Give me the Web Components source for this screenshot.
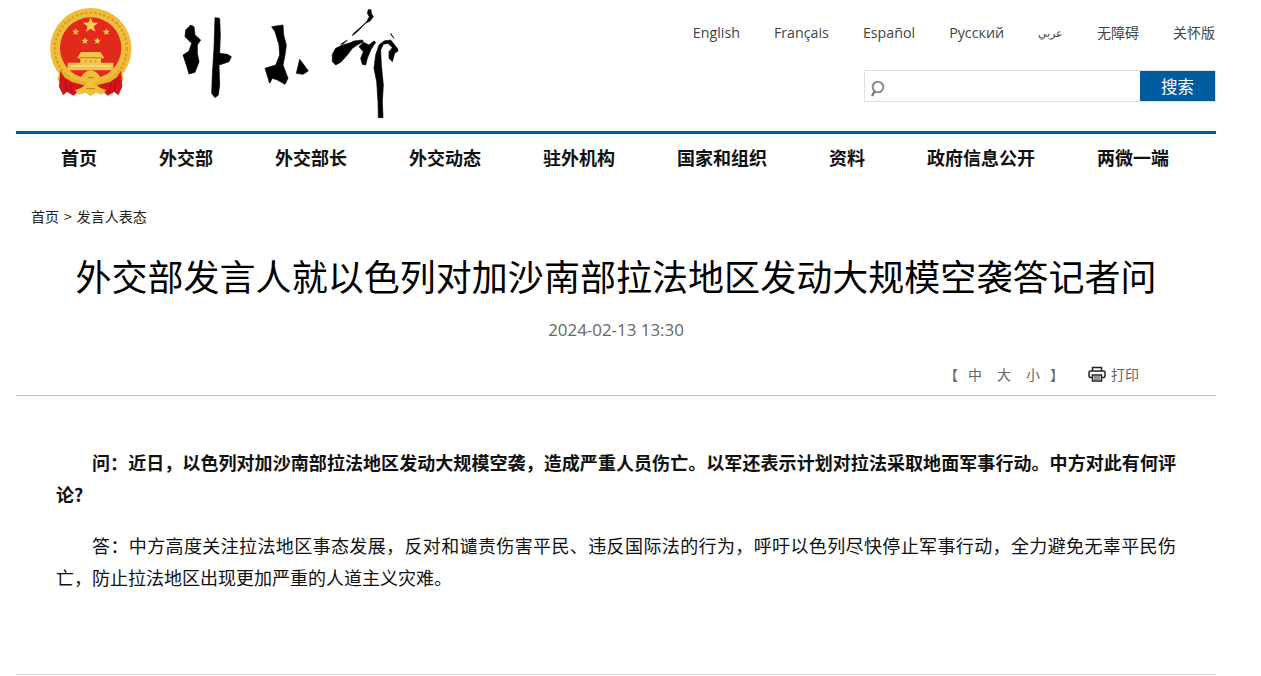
<!DOCTYPE html>
<html lang="zh"><head><meta charset="utf-8"><title>外交部</title>
<style>
html,body{margin:0;padding:0;background:#fff;overflow:hidden;height:676px}
body{font-family:"Open Sans","Noto Sans CJK SC",sans-serif;color:#000}
</style></head><body>
<mfa-page>
  <mfa-header></mfa-header>
  <mfa-nav></mfa-nav>
  <mfa-crumbs></mfa-crumbs>
  <mfa-article>
    <span slot="title">外交部发言人就以色列对加沙南部拉法地区发动大规模空袭答记者问</span>
    <span slot="date">2024-02-13 13:30</span>
    <p class="q">问：近日，以色列对加沙南部拉法地区发动大规模空袭，造成严重人员伤亡。以军还表示计划对拉法采取地面军事行动。中方对此有何评论?</p>
    <p>答：中方高度关注拉法地区事态发展，反对和谴责伤害平民、违反国际法的行为，呼吁以色列尽快停止军事行动，全力避免无辜平民伤亡，防止拉法地区出现更加严重的人道主义灾难。</p>
  </mfa-article>
</mfa-page>
<script>
function def(name,html){customElements.define(name,class extends HTMLElement{constructor(){super();this.attachShadow({mode:"open"}).innerHTML=html}})}
const F='"Noto Sans CJK SC",sans-serif';
const star=(x,y,r)=>{let p=[];for(let i=0;i<10;i++){const a=-Math.PI/2+i*Math.PI/5,q=i%2?r*.42:r;p.push((x+q*Math.cos(a)).toFixed(2)+" "+(y+q*Math.sin(a)).toFixed(2))}return `<polygon points="${p.join(",")}"/>`};
def("mfa-page",`<style>:host{display:block;width:1200px;margin-left:16px}</style><slot></slot>`);
def("mfa-emblem",`<style>:host{display:block;width:100px;height:100px}svg{display:block}</style>
<svg width="100" height="100" viewBox="0 0 100 100" role="img" aria-label="国徽">
<defs><filter id="b" x="-5%" y="-5%" width="110%" height="110%"><feGaussianBlur stdDeviation=".4"/></filter></defs>
<g filter="url(#b)" transform="translate(4 2) scale(.3333)">
<circle cx="137.500" cy="140" r="122" fill="#efbc3a"/>
<circle cx="137.500" cy="140" r="108" fill="none" stroke="#dd9f22" stroke-width="7" stroke-dasharray="8 6"/>
<circle cx="137" cy="138" r="92" fill="#e12b1f"/>
<g fill="#f8d04c">${star(137,70,24)}${star(92,90,11.5)}${star(184,90,11.5)}${star(120,117,11.5)}${star(157,117,11.5)}</g>
<path d="M108 150H166L178 168L168 170V182H205V205H68V182H106V170L96 168Z" fill="#f2c44e"/>
<path d="M104 165H170V169H104Z" fill="#d4861e"/>
<path d="M78 190H197V194H78Z" fill="#f8dd8a"/>
<path d="M120 174h4v7h-4zM135 174h4v7h-4zM150 174h4v7h-4z" fill="#d98a22"/>
<path d="M46 202C62 226 96 240 137 240C178 240 212 226 228 202L236 232L226 250L137 256L48 250L38 232Z" fill="#e9b02a"/>
<path d="M46 206L58 226L80 240L118 250L104 264L86 281L66 270L54 280L42 254Z" fill="#d3181c"/>
<path d="M228 206L216 226L194 240L156 250L170 264L188 281L208 270L220 280L232 254Z" fill="#d3181c"/>
<path d="M60 232l6 34M76 242l6 32M214 232l-6 34M198 242l-6 32" stroke="#a50f14" stroke-width="3" fill="none"/>
<path d="M116 214L126 208L137 204L148 208L158 214L166 226L152 236L148 246L166 258L184 264L172 278L152 272L137 282L122 272L102 278L90 264L108 258L126 246L122 236L108 226Z" fill="#f0c038"/>
<path d="M128 224h18v5h-18zM124 258h26v4h-26z" fill="#cf861e"/>
</g>
</svg>`);
def("mfa-logo",`<style>:host{display:block;width:240px;height:125px}svg{display:block}</style>
<svg width="240" height="125" viewBox="0 0 720 375" fill="#000" stroke="#000" stroke-width="2" stroke-linejoin="round" role="img" aria-label="外交部">
<g transform="translate(30 45)">
<path d="M35 30 L45 35 L48 60 L65 75 L55 90 L55 115 L60 140 L48 172 L30 177 L22 150 L12 120 L30 108 L38 85 L18 65 L20 45Z"/>
<path d="M108 8 L122 10 L124 60 L122 115 L145 118 L157 125 L150 140 L130 147 L120 150 L122 210 L118 240 L108 248 L98 235 L100 180 L105 100Z"/>
<path d="M278 35 L312 30 L314 60 L322 90 L318 120 L312 150 L327 190 L318 208 L295 195 L280 190 L272 205 L258 160 L290 150 L302 120 L300 90 L288 50Z"/>
<path d="M362 133 L375 150 L388 168 L372 178 L352 175 L358 150Z"/>
</g>
<g transform="translate(465 15)">
<path d="M133 14 L141 14 L142 25 L148 35 L138 48 L125 55 L100 80 L85 92 L88 86 L115 62 L128 50 L136 35 L130 25Z"/>
<path d="M25 148 L35 130 L55 120 L75 115 L90 108 L115 105 L118 110 L100 120 L85 130 L70 150 L50 172 L35 180 L25 170Z"/>
<path d="M50 118 L70 105 L60 115Z"/>
<path d="M105 125 L118 112 L135 120 L150 108 L155 112 L140 135 L130 160 L125 180 L115 178 L110 160 L118 140Z"/>
<path d="M150 190 L155 150 L165 120 L180 108 L200 105 L212 120 L220 130 L222 138 L212 145 L205 170 L195 160 L195 140 L205 128 L192 115 L178 118 L170 135 L172 180 L178 240 L175 290 L177 338 L163 338 L162 290 L158 230Z"/>
<path d="M200 85 L210 100 L203 92Z"/>
</g>
</svg>`);
def("mfa-search",`<style>:host{display:flex;width:352px;height:32px;box-sizing:border-box;border:1px solid #dcdfe3;font-family:${F}}
.i{flex:1;display:flex;align-items:center;padding-left:5px}
button{all:unset;width:75px;margin:0;background:#005c9f;color:#fff;font-size:16.500px;text-align:center;line-height:30px}</style>
<div class="i"><svg width="16" height="24" viewBox="0 0 16 24"><circle cx="8" cy="13" r="5.300" fill="none" stroke="#8a8a8a" stroke-width="2"/><path d="M4.500 17.500L2 22" stroke="#777" stroke-width="2.400"/></svg></div>
<button>搜索</button>`);
def("mfa-header",`<style>:host{display:flex;height:131px;box-sizing:border-box}
.e{margin:0 0 0 25px}.l{margin-left:28px}
.r{margin-left:auto;display:flex;flex-direction:column;align-items:flex-end}
.langs{display:flex;gap:34px;margin-top:23px;padding-right:1px;font:14.250px/20px "Open Sans","Noto Sans CJK SC",sans-serif;color:#444}
.s{margin-top:27px}
.z{font:14px/18px ${F}}
.ar{font-size:11px}</style>
<mfa-emblem class="e"></mfa-emblem><mfa-logo class="l"></mfa-logo>
<div class="r"><div class="langs"><span>English</span><span>Français</span><span>Español</span><span>Русский</span><span class="ar">عربي</span><span class="z">无障碍</span><span class="z">关怀版</span></div>
<mfa-search class="s"></mfa-search></div>`);
def("mfa-nav",`<style>:host{display:flex;height:46px;padding-bottom:4px;border-top:3px solid #005c9f;padding-left:45px;gap:62px;align-items:center;font:700 18px/46px ${F};color:#111;white-space:nowrap}
</style><span>首页</span><span>外交部</span><span>外交部长</span><span>外交动态</span><span>驻外机构</span><span>国家和组织</span><span>资料</span><span>政府信息公开</span><span>两微一端</span>`);
def("mfa-crumbs",`<style>:host{display:flex;gap:5px;margin-top:22px;padding-left:15px;font:14px/20px ${F};color:#222;height:20px}</style><span>首页</span><span>&gt;</span><span>发言人表态</span>`);
def("mfa-article",`<style>:host{display:block}
h1{margin:24px 0 0;font:400 36px/50px ${F};text-align:center;color:#000;letter-spacing:.04px;white-space:nowrap}
.d{margin-top:18px;text-align:center;font:16.900px/24px "Open Sans",sans-serif;color:#666}
.bar{margin-top:13px;height:41px;padding-bottom:2px;display:flex;align-items:center;justify-content:flex-end;padding-right:77px;border-bottom:1px solid #a9c9e0;font:14px/20px ${F};color:#666;box-sizing:border-box}
.sz{display:flex;gap:15px;margin-right:24px}
.sz span:first-child{margin-right:-5px}.sz span:nth-child(4){margin-right:-5px}
.p{display:flex;align-items:center;gap:5px}
.c{padding:50px 40px 0;height:279px;box-sizing:border-box;border-bottom:1px solid #d9dde0;font:18px/32px ${F};color:#111}
::slotted(p){margin:0 0 19px;text-indent:36px;text-align:justify}
::slotted(p.q){font-weight:700}
</style>
<h1><slot name="title"></slot></h1><div class="d"><slot name="date"></slot></div>
<div class="bar"><div class="sz"><span>【</span><span>中</span><span>大</span><span>小</span><span>】</span></div>
<div class="p"><svg width="18" height="16" viewBox="0 0 18 16" fill="none" stroke="#222" stroke-width="1.500"><path d="M4.500 5V1.500h9V5"/><rect x="1" y="5" width="16" height="6.500" rx="1.500"/><rect x="4.500" y="9" width="9" height="6" fill="#fff"/><path d="M6 11h6M6 13h6" stroke-width="1"/></svg><span>打印</span></div></div>
<div class="c"><slot></slot></div>`);
</script>
</body></html>
